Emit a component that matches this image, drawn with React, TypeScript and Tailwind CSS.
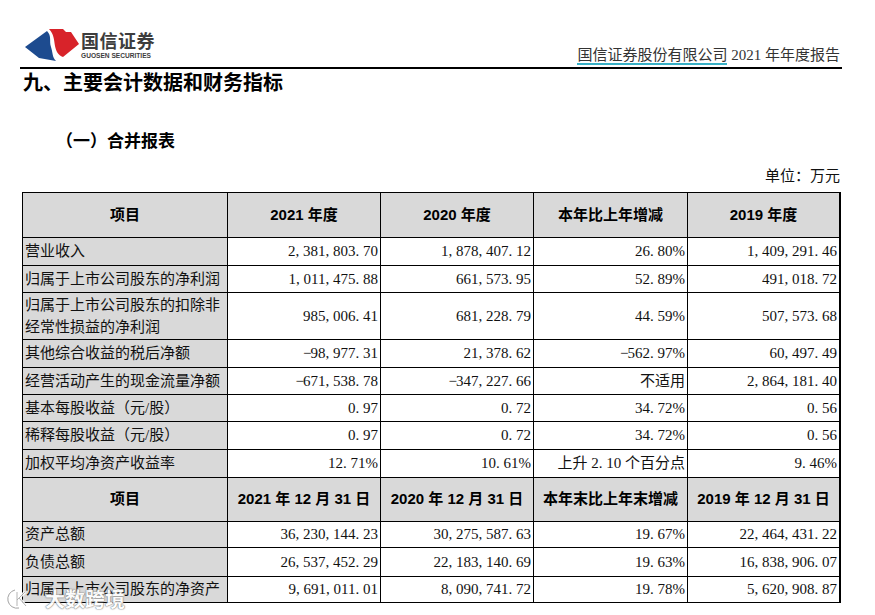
import React from "react";

const serif = "font-['Liberation_Serif','Noto_Sans_CJK_SC',serif]";

type Row = {
  label: React.ReactNode;
  cells: string[];
  h: string;
};

const rowsYear: Row[] = [
  { label: "营业收入", cells: ["2,381,803.70", "1,878,407.12", "26.80%", "1,409,291.46"], h: "h-[27px]" },
  { label: "归属于上市公司股东的净利润", cells: ["1,011,475.88", "661,573.95", "52.89%", "491,018.72"], h: "h-[26px]" },
  {
    label: (
      <span className="leading-[22px]">
        归属于上市公司股东的扣除非
        <br />
        经常性损益的净利润
      </span>
    ),
    cells: ["985,006.41", "681,228.79", "44.59%", "507,573.68"],
    h: "h-[46px]",
  },
  { label: "其他综合收益的税后净额", cells: ["−98,977.31", "21,378.62", "−562.97%", "60,497.49"], h: "h-[27px]" },
  { label: "经营活动产生的现金流量净额", cells: ["−671,538.78", "−347,227.66", "不适用", "2,864,181.40"], h: "h-[26px]" },
  { label: "基本每股收益（元/股）", cells: ["0.97", "0.72", "34.72%", "0.56"], h: "h-[26px]" },
  { label: "稀释每股收益（元/股）", cells: ["0.97", "0.72", "34.72%", "0.56"], h: "h-[27px]" },
  { label: "加权平均净资产收益率", cells: ["12.71%", "10.61%", "上升 2.10 个百分点", "9.46%"], h: "h-[27px]" },
];

const rowsDate: Row[] = [
  { label: "资产总额", cells: ["36,230,144.23", "30,275,587.63", "19.67%", "22,464,431.22"], h: "h-[25px]" },
  { label: "负债总额", cells: ["26,537,452.29", "22,183,140.69", "19.63%", "16,838,906.07"], h: "h-[28px]" },
  { label: "归属于上市公司股东的净资产", cells: ["9,691,011.01", "8,090,741.72", "19.78%", "5,620,908.87"], h: "h-[25px]" },
];

// SimSun-style half-width punctuation: every comma / dot / minus takes a digit cell
function Num({ value }: { value: string }) {
  return (
    <>
      {value.split("").map((ch, i) =>
        ",.−".includes(ch) ? (
          <span key={i} className="inline-block w-[7.5px] text-left">
            {ch}
          </span>
        ) : (
          <React.Fragment key={i}>{ch}</React.Fragment>
        )
      )}
    </>
  );
}

function HeadCell({ children, h }: { children: React.ReactNode; h: string }) {
  return (
    <div
      className={`${h} flex items-center justify-center bg-[#d9d9d9] font-bold text-[15px] text-black font-['Liberation_Sans','Noto_Sans_CJK_SC',sans-serif]`}
    >
      {children}
    </div>
  );
}

function DataRow({ row }: { row: Row }) {
  return (
    <>
      <div className={`${row.h} flex items-center bg-[#d9d9d9] pl-[2px] text-[15px] text-[#111]`}>
        {row.label}
      </div>
      {row.cells.map((c, i) => (
        <div
          key={i}
          className={`${row.h} flex items-center justify-end bg-white pr-[2px] text-[15px] text-[#111] whitespace-nowrap`}
        >
          <Num value={c} />
        </div>
      ))}
    </>
  );
}

function Logo() {
  return (
    <div className="flex items-center gap-[2px]">
      <svg width="54" height="33" viewBox="0 0 54 33">
        <path
          d="M0 19 L22 3 C27 8 24 13 26 19 C28 25 27 29 31 33 L14 30 Z"
          fill="#1d4b8f"
        />
        <path
          d="M24 1 L38 1 L41 4 L46 4 L54 16 L38 29 C33 27 31 23 30 18 C29 12 29 6 24 1 Z"
          fill="#d8232a"
        />
      </svg>
      <div className="flex flex-col items-start">
        <span className="text-[18px] leading-[22px] font-bold tracking-[0.5px] text-[#3d3d3d] font-['Noto_Sans_CJK_SC',sans-serif]">
          国信证券
        </span>
        <span className="text-[6.6px] leading-[9px] font-bold text-[#3d3d3d] font-['Liberation_Sans',sans-serif]">
          GUOSEN SECURITIES
        </span>
      </div>
    </div>
  );
}

function Watermark() {
  return (
    <div className="absolute left-[5px] bottom-[4px] flex items-center gap-[8px] opacity-90">
      <svg width="32" height="24" viewBox="0 0 32 24" fill="none">
        <path d="M10 3 A9 9 0 1 0 14 21" stroke="#fff" strokeWidth="3.5" />
        <path d="M10 3 A9 9 0 1 0 14 21" stroke="#9a9a9a" strokeWidth="1" />
        <path d="M12 5 L12 19 M12 13 L20 5 M14 11 L21 19" stroke="#fff" strokeWidth="3" />
        <path d="M12 5 L12 19 M12 13 L20 5 M14 11 L21 19" stroke="#9a9a9a" strokeWidth="0.8" />
      </svg>
      <span className="text-[20px] leading-[24px] text-white font-bold font-['Noto_Sans_CJK_SC',sans-serif] [text-shadow:0_0_1px_#777,0_0_1px_#777,0_0_2px_#999]">
        大数跨境
      </span>
    </div>
  );
}

export default function App() {
  return (
    <div className={`relative w-[875px] h-[615px] overflow-hidden bg-white ${serif}`}>
      <div className="flex h-[67px] items-end justify-between pl-[25px] pr-[35px]">
        <div className="mb-[6px]">
          <Logo />
        </div>
        <div className="mb-[2px] text-[15px] leading-[20px] text-[#333]">
          <span className="border-b-2 border-[#37b0c6]">国信证券股份有限公司</span>
          <span> 2021 年年度报告</span>
        </div>
      </div>
      <div className="ml-[20px] h-[2px] w-[822px] bg-black" />

      <h1 className="pl-[23px] text-[20px] leading-[26px] font-bold text-black font-['Noto_Sans_CJK_SC',sans-serif]">
        九、主要会计数据和财务指标
      </h1>

      <h2 className="mt-[33px] pl-[56px] text-[17px] leading-[24px] font-bold text-black font-['Noto_Sans_CJK_SC',sans-serif]">
        （一）合并报表
      </h2>

      <div className="mt-[14px] pr-[35px] text-right text-[15px] leading-[20px] text-[#111]">
        单位：万元
      </div>

      <div className="ml-[22px] mt-[6px] grid w-[819px] grid-cols-[204px_152px_152px_153px_151px] gap-px bg-black p-px">
        <HeadCell h="h-[44px]">项目</HeadCell>
        <HeadCell h="h-[44px]">2021 年度</HeadCell>
        <HeadCell h="h-[44px]">2020 年度</HeadCell>
        <HeadCell h="h-[44px]">本年比上年增减</HeadCell>
        <HeadCell h="h-[44px]">2019 年度</HeadCell>
        {rowsYear.map((r, i) => (
          <DataRow key={i} row={r} />
        ))}
        <HeadCell h="h-[43px]">项目</HeadCell>
        <HeadCell h="h-[43px]">2021 年 12 月 31 日</HeadCell>
        <HeadCell h="h-[43px]">2020 年 12 月 31 日</HeadCell>
        <HeadCell h="h-[43px]">本年末比上年末增减</HeadCell>
        <HeadCell h="h-[43px]">2019 年 12 月 31 日</HeadCell>
        {rowsDate.map((r, i) => (
          <DataRow key={i} row={r} />
        ))}
      </div>

      <Watermark />
    </div>
  );
}
